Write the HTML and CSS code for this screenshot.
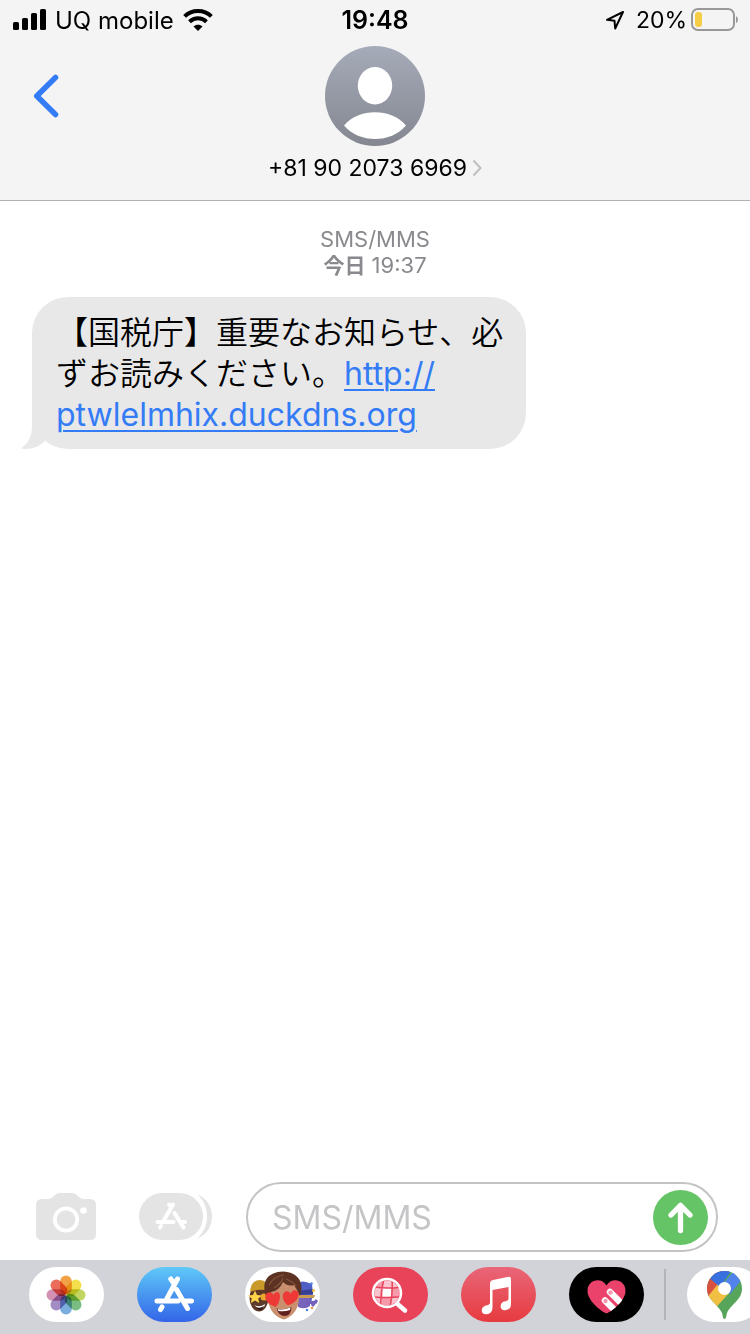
FILE: index.html
```
<!DOCTYPE html>
<html lang="ja">
<head>
<meta charset="utf-8">
<meta name="viewport" content="width=device-width, initial-scale=1">
<title>+81 90 2073 6969</title>
<link rel="stylesheet" href="styles.css">
</head>
<body>
<header class="header">
  <div class="status">
    <div class="status-left">
      <svg width="34" height="22" viewBox="-1 0 34 22" aria-hidden="true">
        <rect x="0" y="13" width="6" height="8" rx="1.5"/><rect x="9" y="9" width="6" height="12" rx="1.5"/><rect x="18" y="4" width="6" height="17" rx="1.5"/><rect x="27" y="0" width="6" height="21" rx="1.5"/>
      </svg>
      <span>UQ mobile</span>
      <svg width="30" height="22" viewBox="0 0 30 22" fill="none" stroke="#000" stroke-width="4" aria-hidden="true">
        <path d="M1.6 7.4C9 .3 21 .3 28.4 7.4"/><path d="M6.500 12.700C11.400 8.200 18.600 8.200 23.500 12.700"/><path d="M15 22 10.500 17.500C13 15 17 15 19.500 17.500Z" fill="#000" stroke="none"/>
      </svg>
    </div>
    <time class="clock">19:48</time>
    <div class="status-right">
      <svg width="20" height="20" viewBox="0 0 20 20" fill="none" stroke="#000" stroke-width="2" stroke-linejoin="round" aria-hidden="true"><path d="M18 2 2 9.800 9.500 10.800 10.200 18.500Z"/></svg>
      <span class="percent">20%</span>
      <svg width="48" height="24" viewBox="0 0 48 24" aria-hidden="true">
        <rect x="2" y="1" width="42" height="21" rx="6" fill="none" stroke="#98989a" stroke-width="2"/><rect x="5" y="4" width="7" height="15" rx="3" fill="#f5ce46"/><path d="M46 8Q48 9 48 11.500T46 15Z" fill="#98989a"/>
      </svg>
    </div>
  </div>
  <div class="nav">
    <button class="back" aria-label="戻る">
      <svg width="26" height="44" viewBox="0 0 26 44" fill="none" stroke="#347bf6" stroke-width="5.500" stroke-linecap="round" stroke-linejoin="round"><path d="M22.500 3.500 3.800 22 22.500 40.500"/></svg>
    </button>
    <button class="contact">
      <svg width="100" height="100" viewBox="0 0 100 100" aria-hidden="true">
        <defs><linearGradient id="avatar" x2="0" y2="1"><stop stop-color="#a6abb9"/><stop offset="1" stop-color="#848790"/></linearGradient></defs>
        <circle cx="50" cy="50" r="50" fill="url(#avatar)"/><ellipse cx="50" cy="39.700" rx="17.200" ry="18.700" fill="#fff"/><path d="M19 79.500C27 70.500 38 66.300 50 66.300S73 70.500 81 79.500C73 88.500 62 93 50 93S27 88.500 19 79.500Z" fill="#fff"/>
      </svg>
      <span class="contact-name">+81 90 2073 6969
        <svg width="10" height="18" viewBox="0 0 10 18" fill="none" stroke="#c0c0c2" stroke-width="2" aria-hidden="true"><path d="M1.500 1.500 8.500 9 1.500 16.500"/></svg>
      </span>
    </button>
  </div>
</header>

<main class="thread">
  <p class="stamp"><span>SMS/MMS</span><span><b>今日</b> 19:37</span></p>
  <div class="bubble">
    <svg class="tail" width="28" height="40" viewBox="0 0 28 40" aria-hidden="true"><path d="M11 0V16C11 27 8 34 0 39.500 10 41 18 38 24 32L28 10Z"/></svg>
    <p class="text">【国税庁】重要なお知らせ、必ずお読みください。<a class="link" href="#">http://<wbr>ptwlelmhix.duckdns.org</a></p>
  </div>
</main>

<form class="composer">
  <button type="button" class="tool" aria-label="カメラ">
    <svg width="60" height="48" viewBox="0 0 60 48"><path d="M6 6H12Q15 6 17 4L19 2Q21 0 24 0H36Q39 0 41 2L43 4Q45 6 48 6H54Q60 6 60 12V41Q60 47 54 47H6Q0 47 0 41V12Q0 6 6 6Z" fill="#e4e4e4"/><circle cx="30" cy="26.500" r="11.200" fill="none" stroke="#fff" stroke-width="3.800"/><circle cx="47.500" cy="17.500" r="3.300" fill="#fff"/></svg>
  </button>
  <button type="button" class="tool" aria-label="アプリ">
    <svg width="74" height="48" viewBox="0 0 74 48"><rect width="64" height="47" rx="23.500" fill="#e4e4e4"/><path d="M59 1.500C67 5 73 13 73 23.500S67 42 58 46C64 40 68 33 68 23.500S64 7 59 1.500Z" fill="#e4e4e4"/><g fill="none" stroke="#fff" stroke-width="4" stroke-linecap="round"><path d="M34 11.500 24.500 28M30 11.500 32 14M18.500 29H34.500M35.500 20 44.500 34.500M41 29H46M22 33 21 34.500"/></g></svg>
  </button>
  <div class="field">
    <input class="input" type="text" aria-label="メッセージ" placeholder="SMS/MMS">
    <button class="send" aria-label="送信">
      <svg width="55" height="55" viewBox="0 0 55 55" fill="none" stroke="#fff" stroke-width="5.300" stroke-linecap="round" stroke-linejoin="round"><path d="M27.500 40.500V15.500M18 25 27.500 15.300 37 25"/></svg>
    </button>
  </div>
</form>

<nav class="drawer" aria-label="App">
  <button class="app white" aria-label="写真">
    <svg width="75" height="55" viewBox="0 0 75 55"><g class="petals" transform="translate(37 28)">
      <rect x="-5.800" y="-19.500" width="11.600" height="19" rx="5.800" fill="#f09a37"/>
      <rect x="-5.800" y="-19.500" width="11.600" height="19" rx="5.800" fill="#f2dd3c" transform="rotate(45)"/>
      <rect x="-5.800" y="-19.500" width="11.600" height="19" rx="5.800" fill="#bcd352" transform="rotate(90)"/>
      <rect x="-5.800" y="-19.500" width="11.600" height="19" rx="5.800" fill="#6fb878" transform="rotate(135)"/>
      <rect x="-5.800" y="-19.500" width="11.600" height="19" rx="5.800" fill="#70a6dc" transform="rotate(180)"/>
      <rect x="-5.800" y="-19.500" width="11.600" height="19" rx="5.800" fill="#9c82bf" transform="rotate(225)"/>
      <rect x="-5.800" y="-19.500" width="11.600" height="19" rx="5.800" fill="#cf88ad" transform="rotate(270)"/>
      <rect x="-5.800" y="-19.500" width="11.600" height="19" rx="5.800" fill="#e8604c" transform="rotate(315)"/>
    </g></svg>
  </button>
  <button class="app store" aria-label="App Store">
    <svg width="75" height="55" viewBox="0 0 75 55" fill="none" stroke="#fff" stroke-width="5" stroke-linecap="round"><path d="M40.500 12 30 31.500M33.800 12 37.200 17M20 34H41M39.500 22.500 50.500 41.500M48 34H54.500M25 40 23.500 42.500"/></svg>
  </button>
  <button class="app white" aria-label="ミー文字">
    <svg width="75" height="55" viewBox="0 0 75 55">
      <ellipse cx="14" cy="31" rx="9.500" ry="13.500" fill="#5e3a28"/><path d="M5 25Q6 13 15 13Q23 13 24 24Q14 21 5 25Z" fill="#c99a2a"/><path d="M9 38Q15 41 20 37Q19 43 14 42Z" fill="#fff"/><path d="M10 40Q15 42 19 39Q18 44 14 43Z" fill="#341b17"/><path d="M10 23.500 12 28 17 28.500 13.200 31.500 14.200 36 10 33.500 5.800 36 6.800 31.500 3 28.500 8 28Z" fill="#ffd64a"/><circle cx="19" cy="30" r="3.500" fill="#eaa92d"/>
      <path d="M53 18Q55 13 61 15L67 17 68 27 66 36Q64 41 54 40Z" fill="#4f5fc5"/><path d="M53 24 68 22V27L53 28Z" fill="#363f91"/><path d="M53 28 70 28 69 31 53 31Z" fill="#c99a52"/><path d="M53 31H65V39Q60 43 53 40Z" fill="#7865bb"/><path d="M61 36 72 35M67 39 72 33" stroke="#7560bd" stroke-width="3"/><circle cx="68.500" cy="23.500" r="1.500" fill="#f1c43b"/><circle cx="67" cy="41" r="1.300" fill="#f09b45"/><circle cx="66.500" cy="16.500" r="1.300" fill="#4e83ed"/><circle cx="62" cy="43" r="1.300" fill="#4e83ed"/>
      <path d="M22 22Q28 12 38 12Q51 12 54 22V33Q52 48 39 52.500Q26 49 23 34Z" fill="#c98f6f"/>
      <path d="M21 29C16 14 23 5 38 4.500C53 5 60 16 55 29L52 23 49 18Q43 20 38 15Q34 24 26 25L23 30Z" fill="#5c3322"/><path d="M24 18Q29 9 39 8M29 21Q36 17 38 11M41 12Q47 14 51 19" fill="none" stroke="#84533a" stroke-width="1.200"/>
      <path d="M31.500 41.500Q39 43.500 46.500 40Q46 49 39.500 49Q34 49 31.500 41.500Z" fill="#61201d"/><path d="M32.500 42Q39 43.500 45.500 40.500L45 43Q39 45 33.500 44Z" fill="#fff"/>
      <path d="M31 40C24 38 19 33 20.500 28.500C22 24 27 24.500 28.500 28C30 23.500 35 24 35 29C35 34 33 37 31 40Z" fill="#ee3a36"/><path d="M43 38.500C39.500 36 37 31.500 38 27.500C39.500 23 44.500 23.500 45.500 27C47 22 52.500 22 53.500 26.500C54.500 31.500 49 36.500 43 38.500Z" fill="#ee3a36"/>
    </svg>
  </button>
  <button class="app red" aria-label="#画像">
    <svg width="75" height="55" viewBox="0 0 75 55" fill="none"><defs><clipPath id="globe"><circle cx="34" cy="26" r="12.500"/></clipPath></defs><g clip-path="url(#globe)"><path d="M21 12H48V40H21Z" fill="#f9c4cf"/><path d="M21 12H30V21H21ZM39 21H48V30H39ZM29 30H38V40H29Z" fill="#f59aab"/><path d="M30 21H38V30H30Z" fill="#fff"/><path d="M21 20Q35 22 48 20M21 30Q35 31 48 30M31 12Q27 26 28 40M39 12Q40 27 37 40" stroke="#e9435a" stroke-width="1.500"/></g><circle cx="34" cy="26" r="14" stroke="#fff" stroke-width="2.500"/><path d="M44.500 37 52 43.500" stroke="#fff" stroke-width="4.500" stroke-linecap="round"/></svg>
  </button>
  <button class="app music" aria-label="ミュージック">
    <svg width="75" height="55" viewBox="0 0 75 55" fill="#fff"><path d="M29 17Q29 13.500 32 13L47.500 9.700Q50 9.500 50 12V37Q50 42.500 44.500 43.300C38.500 44 38 36.500 43 34.500Q47.500 34 47.500 31.500V20L31.500 23V40.500Q31.500 46.500 26 47.200C19.500 48 19 40.500 24.500 38.500Q29 38 29 35.500Z"/></svg>
  </button>
  <button class="app black" aria-label="Digital Touch">
    <svg width="75" height="55" viewBox="0 0 75 55"><defs><clipPath id="heart"><path d="M37.500 46.500C30 43 18.500 33 18.500 24C18.500 12 33 10 37.500 18.500C42 10 56.500 12 56.500 24C56.500 33 45 43 37.500 46.500Z"/></clipPath></defs><g clip-path="url(#heart)"><path d="M18 12H57V48H18Z" fill="#ea426b"/><path d="M36 33.500 48 45.500M41 25 56 40" stroke="#fff" stroke-width="6.500" stroke-linecap="round"/><circle cx="36.500" cy="34" r="2.200" fill="#f49bb0"/><circle cx="41.500" cy="25.500" r="2.200" fill="#f49bb0"/></g></svg>
  </button>
  <hr class="divider">
  <button class="app white" aria-label="Google Maps">
    <svg width="75" height="55" viewBox="0 0 75 55"><defs><clipPath id="pin"><path d="M37.500 52C36 52 35.800 49 35 46C31 37 20 33 20 21.500A17.500 17.500 0 0 1 55 21.500C55 33 44 37 40 46C39.200 49 39 52 37.500 52Z"/></clipPath></defs><g clip-path="url(#pin)"><path d="M18 3H57V54H18Z" fill="#57a55b"/><path d="M18 34 43 3H18Z" fill="#d85140"/><path d="M18 33 31 17 43 25 24 46Z" fill="#f1bf42"/><path d="M20 9 33 20 45 3H24Z" fill="#3870e0"/><path d="M33 20 48 3H58V9L43 27Z" fill="#5283ec"/></g><circle cx="37.500" cy="21.500" r="6.500" fill="#fff"/></svg>
  </button>
</nav>
</body>
</html>
```
FILE: styles.css
```
* { box-sizing: border-box; }
body {
  margin: 0;
  min-height: 100vh;
  display: flex;
  flex-direction: column;
  overflow-x: hidden;
  background: #fff;
  color: #000;
  font-family: Inter, "Noto Sans CJK JP", sans-serif;
}
button {
  padding: 0;
  border: 0;
  background: none;
  color: inherit;
  font: inherit;
}
svg { display: block; flex: none; }
p { margin: 0; }

.header { background: #f4f4f4; border-bottom: 1px solid #b2b2b2; }
.status {
  display: grid;
  grid-template-columns: 1fr auto 1fr;
  align-items: center;
  height: 40px;
  padding: 0 12px;
  font-size: 24px;
}
.status-left, .status-right { display: flex; align-items: center; gap: 9px; }
.status-right { justify-content: flex-end; font-size: 23px; }
.percent { margin: 0 -6px 0 2px; }
.clock { font-weight: 600; font-size: 25px; }

.nav {
  display: grid;
  grid-template-columns: 1fr auto 1fr;
  align-items: start;
  padding: 6px 33px 18px;
}
.back { justify-self: start; margin-top: 28px; }
.contact { display: flex; flex-direction: column; align-items: center; gap: 8px; }
.contact-name { display: flex; align-items: center; gap: 5px; font-size: 23px; line-height: 28px; }

.thread { flex: 1; padding: 25px 32px; }
.stamp {
  display: flex;
  flex-direction: column;
  align-items: center;
  color: #8a8a8e;
  font-size: 22px;
  line-height: 26px;
}
.stamp b { font-weight: 700; font-size: 21px; }
.bubble {
  position: relative;
  width: fit-content;
  max-width: 494px;
  margin-top: 18px;
  padding: 15px 20px 14px 24px;
  border-radius: 36px;
  background: #e8e8e9;
}
.tail { position: absolute; left: -11px; bottom: 0; fill: #e8e8e9; }
.text { font-size: 32px; font-weight: 350; line-height: 41px; }
.link { color: #347bf6; font-weight: 400; text-decoration-thickness: 2px; text-underline-offset: 4px; }

.composer { display: flex; align-items: center; padding: 0 32px 8px 36px; }
.tool { margin-right: 43px; }
.tool + .tool { margin-right: 33px; }
.field {
  flex: 1;
  display: flex;
  align-items: center;
  min-width: 0;
  height: 70px;
  padding: 0 8px 0 24px;
  border: 2px solid #c4c4c4;
  border-radius: 35px;
}
.input {
  flex: 1;
  min-width: 0;
  padding: 0;
  border: 0;
  outline: 0;
  background: none;
  font: 32px Inter, "Noto Sans CJK JP", sans-serif;
}
.input::placeholder { color: #c5c5c7; }
.send { border-radius: 50%; background: #65c466; }

.drawer {
  display: flex;
  align-items: center;
  gap: 33px;
  height: 74px;
  padding: 0 0 5px 29px;
  overflow: hidden;
  background: #d2d3d8;
}
.app { flex: none; border-radius: 28px; overflow: hidden; }
.white { background: #fff; }
.store { background: linear-gradient(#5fc9f8, #3365e8); }
.red { background: #e9435a; }
.music { background: linear-gradient(#e96678, #e63b3f); }
.black { background: #000; }
.petals rect { mix-blend-mode: multiply; opacity: .92; }
.divider { flex: none; width: 2px; height: 51px; margin: 0 -12px 0 -13px; border: 0; background: #b3b4b9; }
```
